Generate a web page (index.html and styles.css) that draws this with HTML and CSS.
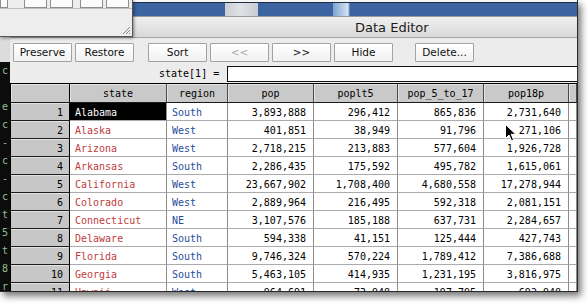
FILE: index.html
```html
<!DOCTYPE html>
<html>
<head>
<meta charset="utf-8">
<link rel="stylesheet" href="styles.css">
</head>
<body>
<div class="shot">
  <div class="desk"></div>
  <div class="main">
    <div class="behind">
      <div class="behind-top"></div>
      <div class="term">
        <div>c</div><div>&nbsp;</div><div>e</div><div>c</div><div>-</div><div>c</div><div>-</div><div>c</div><div>t</div><div>5</div><div>t</div><div>8</div><div>r</div>
      </div>
    </div>
    <div class="editor">
      <div class="titlebar"><span class="title">Data Editor</span></div>
      <div class="toolbar">
        <button class="btn">Preserve</button>
        <button class="btn">Restore</button>
        <button class="btn gap1">Sort</button>
        <button class="btn dis">&lt;&lt;</button>
        <button class="btn">&gt;&gt;</button>
        <button class="btn">Hide</button>
        <button class="btn gap2">Delete...</button>
      </div>
      <div class="cmd"><span class="lbl">state[1] =</span><div class="input"></div></div>
      <table class="grid">
        <colgroup>
          <col class="c0"><col class="c1"><col class="c2"><col class="c3"><col class="c4"><col class="c5"><col class="c6"><col class="c7">
        </colgroup>
        <thead>
          <tr><th class="corner"></th><th>state</th><th>region</th><th>pop</th><th>poplt5</th><th>pop_5_to_17</th><th>pop18p</th><th></th></tr>
        </thead>
        <tbody>
          <tr><td class="rh">1</td><td class="st sel">Alabama</td><td class="rg">South</td><td class="n">3,893,888</td><td class="n">296,412</td><td class="n">865,836</td><td class="n">2,731,640</td><td></td></tr>
          <tr><td class="rh">2</td><td class="st">Alaska</td><td class="rg">West</td><td class="n">401,851</td><td class="n">38,949</td><td class="n">91,796</td><td class="n">271,106</td><td></td></tr>
          <tr><td class="rh">3</td><td class="st">Arizona</td><td class="rg">West</td><td class="n">2,718,215</td><td class="n">213,883</td><td class="n">577,604</td><td class="n">1,926,728</td><td></td></tr>
          <tr><td class="rh">4</td><td class="st">Arkansas</td><td class="rg">South</td><td class="n">2,286,435</td><td class="n">175,592</td><td class="n">495,782</td><td class="n">1,615,061</td><td></td></tr>
          <tr><td class="rh">5</td><td class="st">California</td><td class="rg">West</td><td class="n">23,667,902</td><td class="n">1,708,400</td><td class="n">4,680,558</td><td class="n">17,278,944</td><td></td></tr>
          <tr><td class="rh">6</td><td class="st">Colorado</td><td class="rg">West</td><td class="n">2,889,964</td><td class="n">216,495</td><td class="n">592,318</td><td class="n">2,081,151</td><td></td></tr>
          <tr><td class="rh">7</td><td class="st">Connecticut</td><td class="rg">NE</td><td class="n">3,107,576</td><td class="n">185,188</td><td class="n">637,731</td><td class="n">2,284,657</td><td></td></tr>
          <tr><td class="rh">8</td><td class="st">Delaware</td><td class="rg">South</td><td class="n">594,338</td><td class="n">41,151</td><td class="n">125,444</td><td class="n">427,743</td><td></td></tr>
          <tr><td class="rh">9</td><td class="st">Florida</td><td class="rg">South</td><td class="n">9,746,324</td><td class="n">570,224</td><td class="n">1,789,412</td><td class="n">7,386,688</td><td></td></tr>
          <tr><td class="rh">10</td><td class="st">Georgia</td><td class="rg">South</td><td class="n">5,463,105</td><td class="n">414,935</td><td class="n">1,231,195</td><td class="n">3,816,975</td><td></td></tr>
          <tr><td class="rh">11</td><td class="st">Hawaii</td><td class="rg">West</td><td class="n">964,691</td><td class="n">73,948</td><td class="n">197,795</td><td class="n">692,948</td><td></td></tr>
        </tbody>
      </table>
    </div>
  </div>
  <div class="mini">
    <div class="mini-btns">
      <span class="mb b0"></span><span class="mb b1"></span><span class="mb b2"></span><span class="mb b3"></span><span class="mb b4"></span>
    </div>
    <svg class="grip" width="9" height="9" viewBox="0 0 9 9">
      <path d="M8 1 L1 8 M8 4 L4 8 M8 7 L7 8" stroke="#8a8a8a" stroke-width="1" fill="none"/>
    </svg>
  </div>
  <svg class="cursor" width="12" height="18" viewBox="0 0 12 18">
    <path d="M0.5 0.5 L0.5 14.5 L4 11 L6.5 16.8 L8.6 15.9 L6.2 10.3 L10.8 10.3 Z" fill="#000" stroke="#fff" stroke-width="1"/>
  </svg>
</div>
</body>
</html>
```

FILE: styles.css
```css
html, body {
  margin: 0;
  padding: 0;
  background: #ffffff;
}
body {
  width: 588px;
  height: 304px;
  overflow: hidden;
}
.shot {
  position: relative;
  width: 577px;
  height: 291px;
  border-right: 1px solid #2a2a2a;
  border-bottom: 1px solid #2a2a2a;
  box-shadow: 3px 4px 7px rgba(0,0,0,0.55);
  overflow: hidden;
  display: flex;
  flex-direction: column;
  background: #ececec;
}
.desk {
  height: 14px;
  flex: none;
  border-top: 2px solid #f6f6f6;
  box-shadow: inset 0 1px 0 #1e2c44;
  background:
    linear-gradient(to right,
      #3c64a0 0, #3c64a0 225px,
      #c9ccd2 225px, #dfe2e6 240px, #c9ccd2 258px,
      #3c64a0 258px, #3c64a0 333px,
      #7fa3d0 333px, #d3e3f3 348px, #3c64a0 350px,
      #3c64a0 100%);
  border-bottom: 1px solid #9a9a9a;
}
.main {
  flex: 1;
  display: flex;
  min-height: 0;
}
.behind {
  width: 10px;
  flex: none;
  display: flex;
  flex-direction: column;
}
.behind-top {
  height: 45px;
  flex: none;
  background: #dcdcdc;
}
.term {
  flex: 1;
  background: #0c0c0c;
  color: #8fc08f;
  font-family: "DejaVu Sans Mono", monospace;
  font-size: 10px;
  line-height: 18px;
  overflow: hidden;
  white-space: nowrap;
  padding-left: 2px;
}
.editor {
  flex: 1;
  display: flex;
  flex-direction: column;
  min-width: 0;
  background: #ececec;
}
.titlebar {
  height: 20px;
  flex: none;
  border-bottom: 1px solid #a4a4a4;
  background: linear-gradient(#f0f0f0, #d8d8d8);
  display: flex;
  align-items: center;
  padding-left: 345px;
}
.title {
  font-family: "DejaVu Sans", sans-serif;
  font-size: 13px;
  color: #1a1a1a;
}
.toolbar {
  height: 22px;
  flex: none;
  padding: 5px 0 0 3px;
  display: flex;
  align-items: flex-start;
  gap: 3px;
}
.btn {
  width: 59px;
  height: 19px;
  box-sizing: border-box;
  margin: 0;
  padding: 0;
  border: 1px solid #a2a2a2;
  border-radius: 1px;
  background: linear-gradient(#ffffff, #f1f1f1);
  font-family: "DejaVu Sans", sans-serif;
  font-size: 10.5px;
  color: #111;
  line-height: 17px;
  text-align: center;
}
.btn.dis {
  color: #a8a8a8;
}
.btn.gap1 {
  margin-left: 11px;
}
.btn.gap2 {
  margin-left: 19px;
}
.cmd {
  height: 18px;
  flex: none;
  display: flex;
  align-items: flex-start;
  padding-left: 149px;
}
.lbl {
  font-family: "DejaVu Sans Mono", monospace;
  font-size: 10px;
  color: #000;
  width: 62px;
  margin-top: 3px;
  margin-right: 6px;
  white-space: nowrap;
}
.input {
  flex: 1;
  height: 16px;
  box-sizing: border-box;
  margin-top: 1px;
  border: 1px solid #111;
  border-right: none;
  background: #fff;
}
.grid {
  border-collapse: separate;
  border-spacing: 0;
  table-layout: fixed;
  width: 567px;
  font-family: "DejaVu Sans Mono", monospace;
  font-size: 10px;
  border-top: 1px solid #000;
}
.c0 { width: 60px; }
.c1 { width: 97px; }
.c2 { width: 61px; }
.c3 { width: 86px; }
.c4 { width: 84px; }
.c5 { width: 86px; }
.c6 { width: 85px; }
.c7 { width: 8px; }
.grid th {
  height: 19px;
  box-sizing: border-box;
  padding: 0;
  background: #c9c9c9;
  border-right: 1px solid #4a4a4a;
  border-bottom: 1px solid #1a1a1a;
  box-shadow: inset 1px 1px 0 #e4e4e4;
  font-weight: normal;
  color: #000;
  text-align: center;
  white-space: nowrap;
  overflow: hidden;
}
.grid th.corner {
  border-left: 1px solid #000;
  border-right: 1px solid #000;
}
.grid td {
  height: 18px;
  box-sizing: border-box;
  padding: 2px 0 0 0;
  background: #fff;
  border-right: 1px solid #8c8c8c;
  border-bottom: 1px solid #ababab;
  white-space: nowrap;
  overflow: hidden;
  color: #000;
}
.grid td.rh {
  background: #c7c7c7;
  border-left: 1px solid #000;
  border-right: 1px solid #000;
  border-bottom: 1px solid #1e1e1e;
  box-shadow: inset 0 1px 0 #e2e2e2;
  text-align: right;
  padding-right: 6px;
}
.grid td.st {
  color: #c03c3c;
  padding-left: 5px;
}
.grid td.sel {
  background: #000;
  color: #fff;
}
.grid td.rg {
  color: #1f4d9c;
  padding-left: 5px;
}
.grid td.n {
  text-align: right;
  padding-right: 7px;
}
.mini {
  position: absolute;
  left: 0;
  top: 0;
  width: 132px;
  height: 36px;
  background: #ededed;
  border-right: 1px solid #555;
  border-bottom: 1px solid #555;
  box-shadow: 1px 1px 3px rgba(0,0,0,0.45);
}
.mini-btns {
  height: 8px;
  border-bottom: 1px solid #bdbdbd;
  display: flex;
  align-items: flex-end;
}
.mb {
  display: block;
  height: 8px;
  box-sizing: border-box;
  border: 1px solid #8e8e8e;
  border-top: none;
  background: #fbfbfb;
}
.b0 { width: 8px; margin-left: 0; }
.b1 { width: 23px; margin-left: 16px; }
.b2 { width: 23px; margin-left: 3px; }
.b3 { width: 23px; margin-left: 7px; }
.b4 { width: 23px; margin-left: 3px; }
.grip {
  position: absolute;
  right: 1px;
  bottom: 1px;
}
.cursor {
  position: absolute;
  left: 505px;
  top: 124px;
}
```
